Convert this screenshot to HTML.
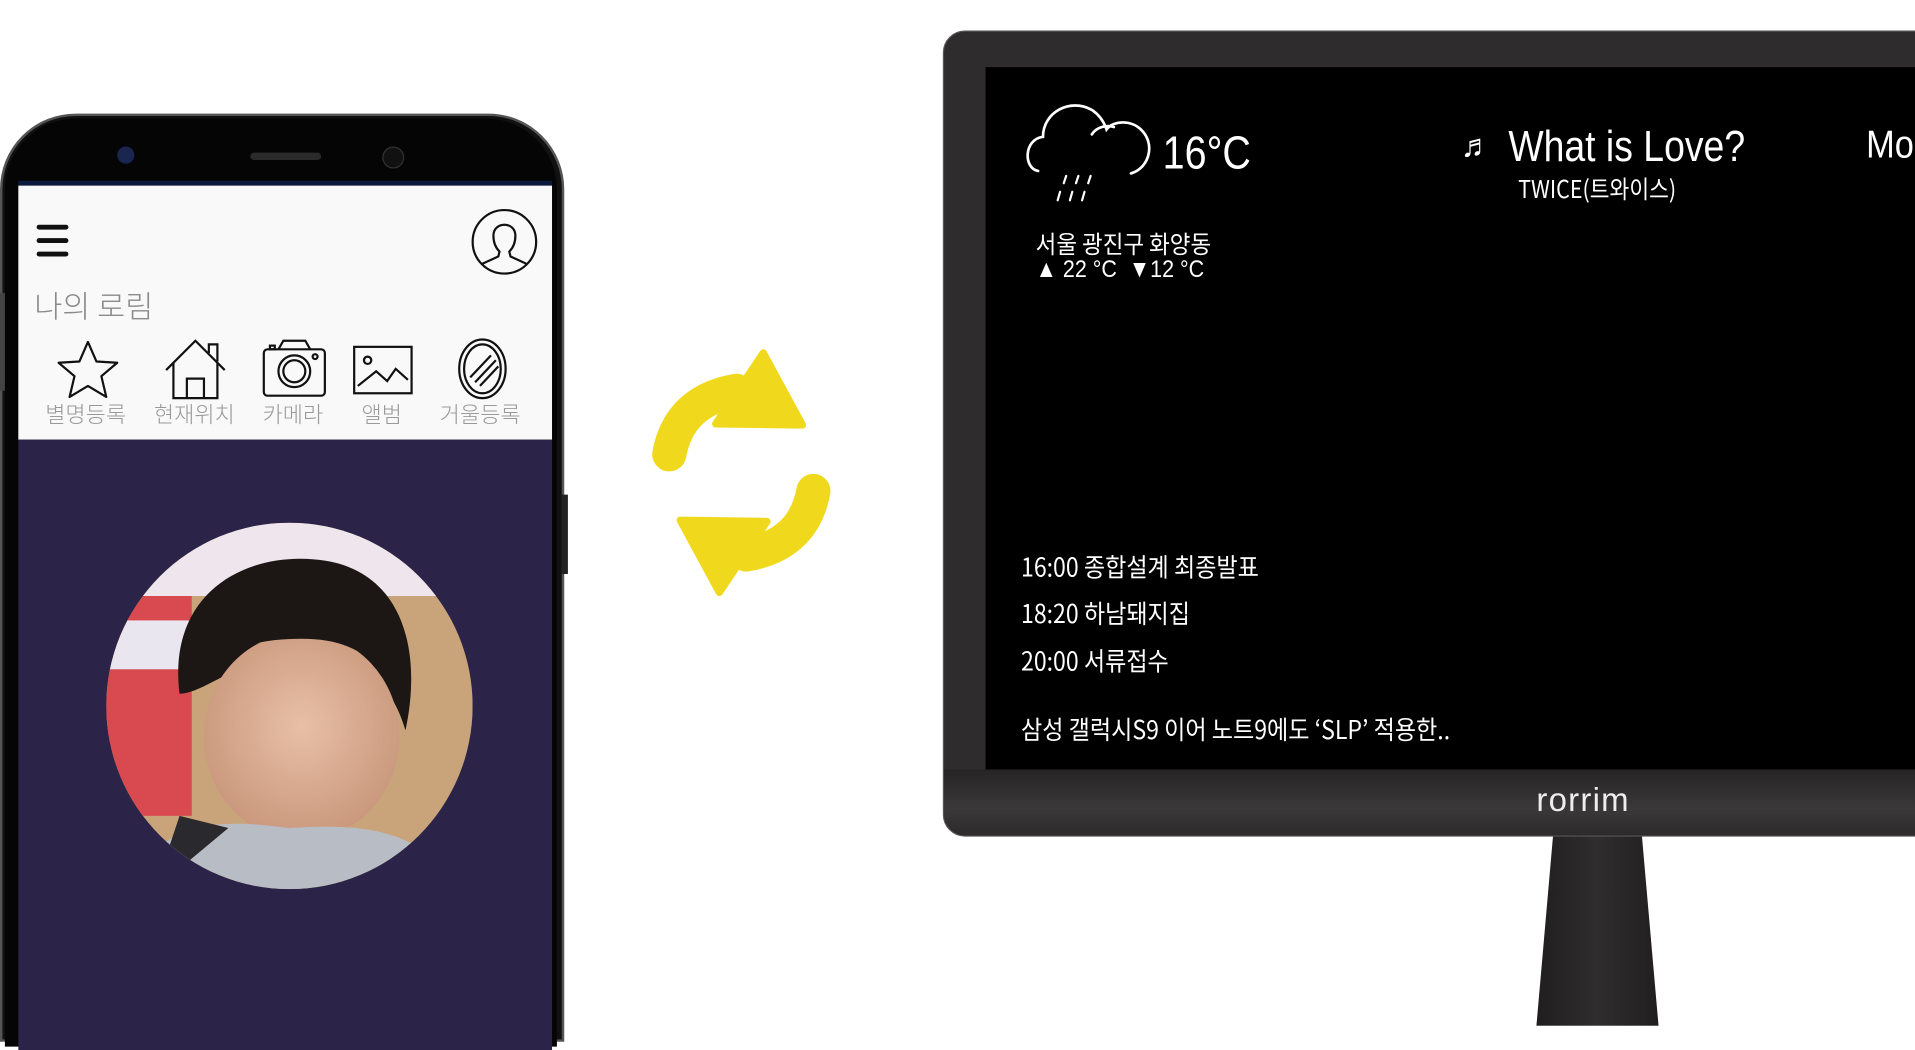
<!DOCTYPE html>
<html><head><meta charset="utf-8">
<style>
html,body{margin:0;padding:0;background:#fff;width:1915px;height:947px;overflow:hidden}
#s{position:absolute;left:0;top:0;width:1568px;height:775px;transform:scale(1.22131);transform-origin:0 0;font-family:"Liberation Sans","Noto Sans CJK KR",sans-serif}
.a{position:absolute;white-space:nowrap}
.w{color:#fff}
.k{font-family:"Noto Sans CJK KR","Liberation Sans",sans-serif;font-weight:400}
</style></head><body>
<div id="s">
<!-- phone -->
<div class="a" style="left:0;top:93px;width:462px;height:760px;background:#111;border-radius:62px 62px 0 0;border:2px solid #555;box-sizing:border-box"></div>
<div class="a" style="left:4px;top:97px;width:452px;height:760px;background:#050505;border-radius:58px 58px 0 0"></div>
<div class="a" style="left:460px;top:405px;width:5px;height:65px;background:#222"></div>
<div class="a" style="left:0;top:240px;width:4px;height:80px;background:#444"></div>
<div class="a" style="left:205px;top:125px;width:58px;height:6px;background:#2a2a2a;border-radius:3px"></div>
<div class="a" style="left:96px;top:120px;width:14px;height:14px;border-radius:50%;background:#1a2550"></div>
<div class="a" style="left:313px;top:120px;width:16px;height:16px;border-radius:50%;background:#111;border:1px solid #333"></div>
<div class="a" style="left:15px;top:148px;width:437px;height:5px;background:#0c1a40"></div>
<div class="a" style="left:15px;top:152px;width:437px;height:208px;background:#f9f9f9"></div>
<div class="a" style="left:15px;top:360px;width:437px;height:500px;background:#2c2448"></div>
<!-- hamburger -->
<div class="a" style="left:30px;top:184px;width:26px;height:4px;background:#111;border-radius:2px"></div>
<div class="a" style="left:30px;top:195px;width:26px;height:4px;background:#111;border-radius:2px"></div>
<div class="a" style="left:30px;top:206px;width:26px;height:4px;background:#111;border-radius:2px"></div>
<svg class="a" style="left:385px;top:170px" width="56" height="56" viewBox="0 0 56 56" fill="none" stroke="#111" stroke-width="1.8">
<circle cx="28" cy="28" r="26"/>
<path d="M19,23 C19,11 37,11 37,23 C37,30 34,34 32,36 L33,40 L46,46 M19,23 C19,30 22,34 24,36 L23,40 L10,46"/>
</svg>
<div class="a k" style="left:28px;top:232px;font-size:25px;color:#8a8a8a;font-weight:300">나의 로림</div>
<!-- icons -->
<svg class="a" style="left:40px;top:276px" width="400" height="52" viewBox="0 0 400 52" fill="none" stroke="#111" stroke-width="1.8">
<path d="M32,4 L39,20 L56,21 L43,32 L47,49 L32,40 L17,49 L21,32 L8,21 L25,20 Z" stroke-linejoin="round"/>
<path d="M96,27 L120,3 L144,27 M102,21 L102,50 L138,50 L138,21 M113,50 L113,34 L127,34 L127,50 M131,13 L131,6 L138,6 L138,20"/>
<rect x="176" y="10" width="50" height="38" rx="3"/><path d="M188,10 L192,3 L210,3 L214,10"/><circle cx="201" cy="28" r="13"/><circle cx="201" cy="28" r="9"/><circle cx="218" cy="16" r="2"/><rect x="181" y="7" width="4" height="3"/>
<rect x="250" y="8" width="47" height="38"/><circle cx="261" cy="19" r="3"/><path d="M253,40 L268,28 L277,36 L284,26 L294,35"/>
<ellipse cx="355" cy="26" rx="19" ry="24"/><ellipse cx="355" cy="26" rx="15" ry="20"/><path d="M345,33 L362,15 M349,37 L366,19 M353,40 L368,24"/>
</svg>
<div class="a k" style="left:37px;top:326px;font-size:18px;color:#999;font-weight:300">별명등록</div>
<div class="a k" style="left:126px;top:326px;font-size:18px;color:#999;font-weight:300">현재위치</div>
<div class="a k" style="left:215px;top:326px;font-size:18px;color:#999;font-weight:300">카메라</div>
<div class="a k" style="left:296px;top:326px;font-size:18px;color:#999;font-weight:300">앨범</div>
<div class="a k" style="left:360px;top:326px;font-size:18px;color:#999;font-weight:300">거울등록</div>
<!-- photo -->
<svg class="a" style="left:87px;top:428px" width="300" height="300" viewBox="0 0 300 300">
<defs><clipPath id="c"><circle cx="150" cy="150" r="150"/></clipPath>
<radialGradient id="f" cx="0.5" cy="0.45" r="0.6"><stop offset="0" stop-color="#e8c0a6"/><stop offset="1" stop-color="#c79479"/></radialGradient></defs>
<g clip-path="url(#c)">
<rect width="300" height="300" fill="#c9a47a"/>
<rect x="0" y="0" width="300" height="60" fill="#eee6ec"/>
<rect x="0" y="60" width="70" height="180" fill="#d84a50"/>
<rect x="0" y="80" width="70" height="40" fill="#e9e6ef"/>
<path d="M60,140 C50,60 110,25 170,30 C240,35 260,100 245,170 C230,120 200,110 150,110 C110,110 80,140 60,140 Z" fill="#1c1715"/>
<ellipse cx="160" cy="175" rx="80" ry="85" fill="url(#f)"/>
<path d="M70,130 C75,70 120,40 170,45 C230,50 250,100 242,150 C225,110 200,95 160,95 C110,95 90,110 70,130 Z" fill="#1c1715"/>
<path d="M20,300 C40,250 80,240 150,250 C220,245 260,255 290,300 Z" fill="#b8bcc4"/>
<path d="M40,300 L60,240 L100,250 Z" fill="#2a2a2e"/>
</g></svg>
<!-- sync arrows -->
<svg class="a" style="left:520px;top:280px" width="180" height="215" viewBox="520 280 180 215">
<g fill="#f0d91c">
<path d="M548,372 Q556,328 603,320" fill="none" stroke="#f0d91c" stroke-width="28" stroke-linecap="round"/>
<path d="M625,289 L657,348 L586,347 Z" stroke="#f0d91c" stroke-width="6" stroke-linejoin="round"/>
<g transform="rotate(180 607 387)">
<path d="M548,372 Q556,328 603,320" fill="none" stroke="#f0d91c" stroke-width="28" stroke-linecap="round"/>
<path d="M625,289 L657,348 L586,347 Z" stroke="#f0d91c" stroke-width="6" stroke-linejoin="round"/>
</g></g></svg>
<!-- monitor -->
<div class="a" style="left:1258px;top:680px;width:100px;height:160px;clip-path:polygon(14% 0,86% 0,100% 100%,0 100%);background:linear-gradient(90deg,#201e1f,#2f2d2e,#201e1f)"></div>
<div class="a" style="left:772px;top:25px;width:820px;height:660px;background:#2e2c2d;border-radius:18px;border:1px solid #555;box-sizing:border-box"></div>
<div class="a" style="left:773px;top:630px;width:820px;height:54px;background:linear-gradient(180deg,#262425,#3a3839 60%,#2c2a2b);border-radius:0 0 17px 17px"></div>
<div class="a" style="left:807px;top:55px;width:780px;height:575px;background:#000"></div>
<div class="a w" style="left:1258px;top:640px;font-size:27px;font-weight:300;letter-spacing:1px;color:#eee">rorrim</div>
<!-- weather -->
<svg class="a" style="left:836px;top:82px" width="112" height="95" viewBox="0 0 112 95" fill="none" stroke="#fff" stroke-width="2.2" stroke-linecap="round">
<path d="M14,58 C2,56 2,32 18,30 C18,10 40,-2 58,8 C64,12 68,18 70,24 C76,16 92,16 100,26 C110,38 104,56 90,60"/>
<path d="M58,28 C62,22 70,20 76,22"/>
<path d="M37,62 L35,68 M47,62 L45,68 M57,62 L55,68 M32,75 L30,82 M42,75 L40,82 M52,75 L50,82" stroke-width="1.8"/>
</svg>
<div class="a w" style="left:952px;top:105px;font-size:38px;transform:scaleX(0.85);transform-origin:0 0">16°C</div>
<div class="a w k" style="left:848px;top:184px;font-size:20px;transform:scaleX(0.92);transform-origin:0 0">서울 광진구 화양동</div>
<div class="a w" style="left:848px;top:210px;font-size:20px;transform:scaleX(0.88);transform-origin:0 0">▲ 22 °C &nbsp;▼12 °C</div>
<div class="a w" style="left:1196px;top:104px;font-size:26px">♬</div>
<div class="a w" style="left:1235px;top:99px;font-size:36px;transform:scaleX(0.85);transform-origin:0 0">What is Love?</div>
<div class="a w k" style="left:1243px;top:139px;font-size:20px;transform:scaleX(0.88);transform-origin:0 0">TWICE(트와이스)</div>
<div class="a w" style="left:1528px;top:100px;font-size:32px;transform:scaleX(0.88);transform-origin:0 0">Mo</div>
<div class="a w k" style="left:836px;top:449px;font-size:21px;transform:scaleX(0.9);transform-origin:0 0">16:00 종합설계 최종발표</div>
<div class="a w k" style="left:836px;top:487px;font-size:21px;transform:scaleX(0.9);transform-origin:0 0">18:20 하남돼지집</div>
<div class="a w k" style="left:836px;top:526px;font-size:21px;transform:scaleX(0.9);transform-origin:0 0">20:00 서류접수</div>
<div class="a w k" style="left:836px;top:582px;font-size:21px;transform:scaleX(0.9);transform-origin:0 0">삼성 갤럭시S9 이어 노트9에도 ‘SLP’ 적용한..</div>
</div>
</body></html>
